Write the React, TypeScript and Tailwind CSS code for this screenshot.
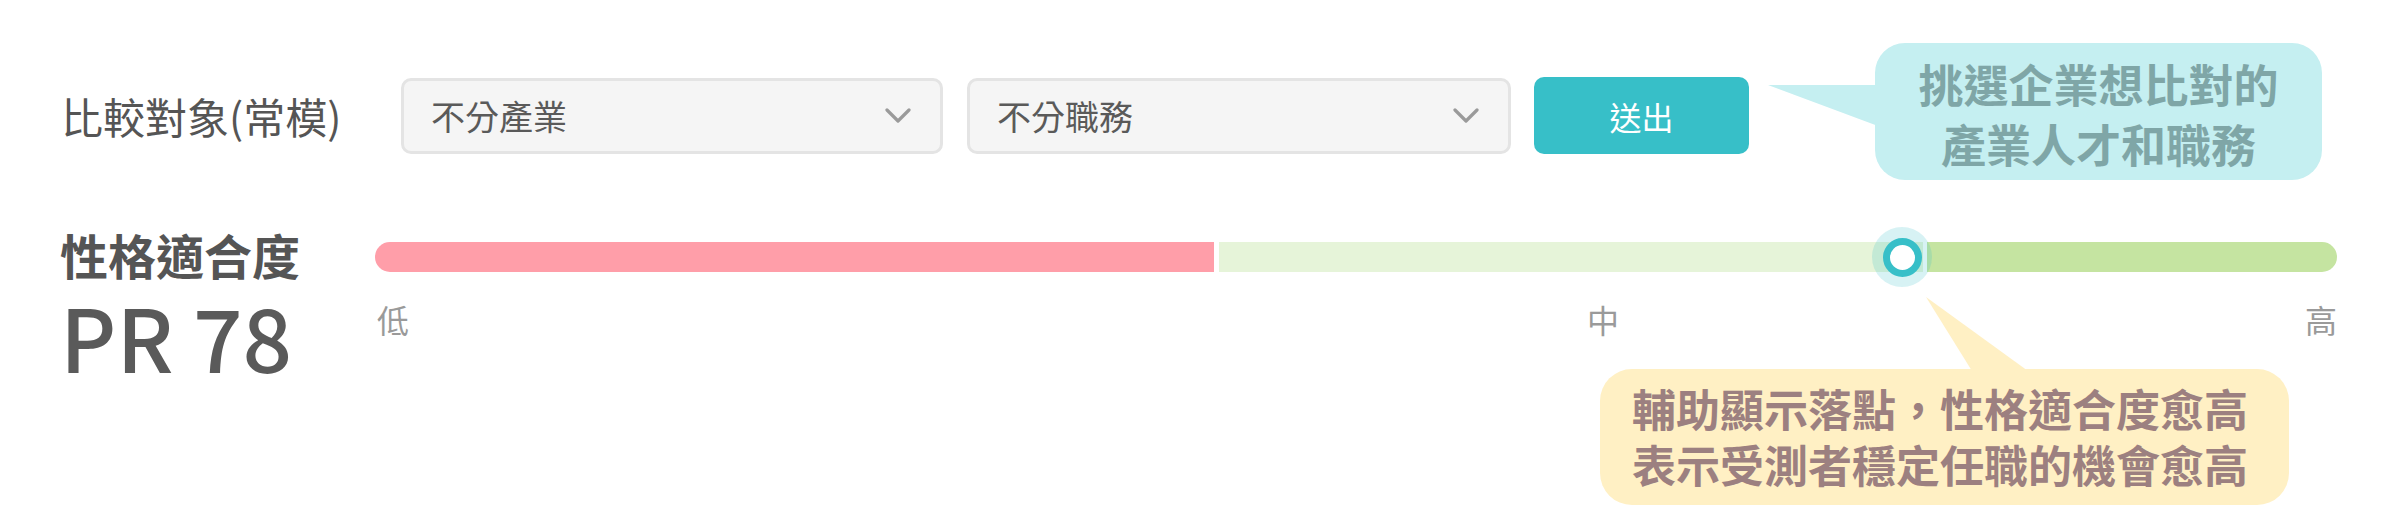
import React from "react";

function Chevron() {
  return (
    <svg width="26" height="16" viewBox="0 0 26 16" fill="none">
      <path d="M2 2 L13 13 L24 2" stroke="#9a9a9a" strokeWidth="3.2" strokeLinecap="round" strokeLinejoin="round" />
    </svg>
  );
}

function Select({ label, w }: { label: string; w: string }) {
  return (
    <div className={`${w} h-[76px] flex items-center justify-between rounded-[10px] border-[3px] border-[#e4e4e4] bg-[#f5f5f5] pl-[27px] pr-[29px]`}>
      <span className="text-[34px] leading-none text-[#5a5a5a]">{label}</span>
      <Chevron />
    </div>
  );
}

export default function App() {
  return (
    <div
      className="relative w-[2400px] h-[508px] overflow-hidden bg-white"
      style={{ fontFamily: '"Noto Sans CJK TC", "Noto Sans", sans-serif' }}
    >
      {/* Row 1 */}
      <div className="flex items-center pt-[77px] pl-[61px]">
        <div className="w-[340px] text-[42px] leading-none text-[#555555]">比較對象(常模)</div>
        <Select label="不分產業" w="w-[542px]" />
        <div className="w-[24px]" />
        <Select label="不分職務" w="w-[544px]" />
        <button className="ml-[23px] w-[215px] h-[77px] rounded-[10px] bg-[#37bfc8] text-white text-[32px] leading-none">
          送出
        </button>
      </div>

      {/* Row 2 */}
      <div className="flex items-start mt-[70px] pl-[60px]">
        <div className="w-[315px] flex flex-col">
          <div className="text-[48px] leading-[60px] font-bold text-[#555555]">性格適合度</div>
          <div className="mt-[8px] text-[87px] leading-[87px] font-medium text-[#5a5a5a]">PR 78</div>
        </div>
        <div className="w-[1962px] flex flex-col mt-[18px]">
          <div className="relative flex h-[30px]">
            <div className="w-[839px] h-full rounded-l-full bg-[#ff9ea9]" />
            <div className="w-[5px]" />
            <div className="w-[704px] h-full bg-[#e6f4d9]" />
            <div className="w-[4px]" />
            <div className="w-[410px] h-full rounded-r-full bg-[#c5e4a1]" />
            <div className="absolute left-[1497px] top-[-15px] w-[60px] h-[60px] rounded-full bg-[#37bfc8]/20 flex items-center justify-center">
              <div className="w-[39px] h-[39px] rounded-full border-[7px] border-[#37bfc8] bg-white" />
            </div>
          </div>
          <div className="flex mt-[31px] pl-[2px] text-[32px] leading-[32px] text-[#9a9a9a]">
            <span>低</span>
            <span className="ml-[1178px]">中</span>
            <span className="flex-1" />
            <span>高</span>
          </div>
        </div>
      </div>

      {/* Tooltip 1 */}
      <svg className="absolute left-[1768px] top-[85px]" width="110" height="42" viewBox="0 0 110 42">
        <polygon points="0,0 110,0 110,41" fill="#c5eff1" />
      </svg>
      <div className="absolute left-[1875px] top-[43px] w-[447px] h-[137px] rounded-[30px] bg-[#c5eff1] flex flex-col items-center justify-center pt-[4px] text-[45px] leading-[60px] font-bold text-[#7fa6a7]">
        <div>挑選企業想比對的</div>
        <div>產業人才和職務</div>
      </div>

      {/* Tooltip 2 */}
      <svg className="absolute left-[1926px] top-[297px]" width="102" height="74" viewBox="0 0 102 74">
        <polygon points="0,0 46,74 102,74" fill="#fff0c4" />
      </svg>
      <div className="absolute left-[1600px] top-[369px] w-[689px] h-[136px] rounded-[32px] bg-[#fff0c4] flex flex-col justify-center pl-[32px] pb-[2px] text-[44px] leading-[56px] font-bold text-[#9c8080]">
        <div>輔助顯示落點，性格適合度愈高</div>
        <div>表示受測者穩定任職的機會愈高</div>
      </div>
    </div>
  );
}
